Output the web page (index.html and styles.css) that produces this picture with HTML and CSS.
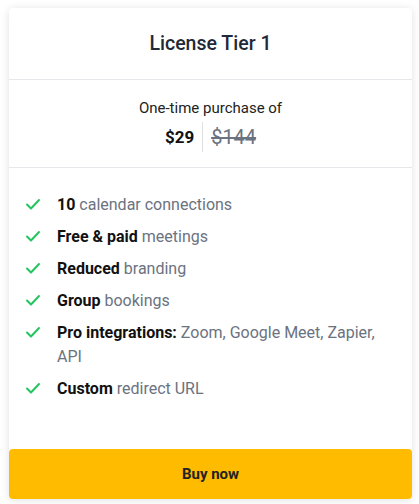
FILE: index.html
```html
<!DOCTYPE html>
<html>
<head>
<meta charset="utf-8">
<link rel="stylesheet" href="styles.css">
</head>
<body>
<div class="card">
  <div class="header"><h2 class="title">License Tier 1</h2></div>
  <div class="price">
    <div class="price-label">One-time purchase of</div>
    <div class="price-row">
      <span class="now">$29</span>
      <span class="sep"></span>
      <span class="was">$144</span>
    </div>
  </div>
  <ul class="features">
    <li><svg class="check" viewBox="0 0 16 16"><path d="M2 8.5l4 4L14 4"/></svg><span><b>10</b> calendar connections</span></li>
    <li><svg class="check" viewBox="0 0 16 16"><path d="M2 8.5l4 4L14 4"/></svg><span><b>Free &amp; paid</b> meetings</span></li>
    <li><svg class="check" viewBox="0 0 16 16"><path d="M2 8.5l4 4L14 4"/></svg><span><b>Reduced</b> branding</span></li>
    <li><svg class="check" viewBox="0 0 16 16"><path d="M2 8.5l4 4L14 4"/></svg><span><b>Group</b> bookings</span></li>
    <li><svg class="check" viewBox="0 0 16 16"><path d="M2 8.5l4 4L14 4"/></svg><span><b>Pro integrations:</b> Zoom, Google Meet, Zapier, API</span></li>
    <li><svg class="check" viewBox="0 0 16 16"><path d="M2 8.5l4 4L14 4"/></svg><span><b>Custom</b> redirect URL</span></li>
  </ul>
  <button class="buy">Buy now</button>
</div>
</body>
</html>
```
FILE: styles.css
```css
* { box-sizing: border-box; }
html, body { margin: 0; padding: 0; background: #fff; }
body { font-family: Roboto, "Liberation Sans", sans-serif; padding: 8px 7px 5px 9px; }
.card {
  width: 403px;
  height: 491px;
  background: #fff;
  border-radius: 4px;
  box-shadow: 0 1px 8px rgba(0,0,0,0.12);
  display: flex;
  flex-direction: column;
}
.header {
  height: 72px;
  display: flex;
  align-items: center;
  justify-content: center;
  border-bottom: 1px solid #e5e7eb;
}
.title { margin: 0; font-size: 19.5px; font-weight: 500; color: #1f2937; }
.price {
  height: 88px;
  border-bottom: 1px solid #e5e7eb;
  display: flex;
  flex-direction: column;
  align-items: center;
  padding-top: 18px;
}
.price-label { font-size: 15px; line-height: 20px; color: #222; }
.price-row { display: flex; align-items: center; margin-top: 4px; height: 30px; }
.now { font-size: 17px; font-weight: 700; color: #111; }
.sep { width: 1px; height: 30px; background: #e0e0e0; margin: 0 8px; }
.was { font-size: 20px; color: #6b7280; text-decoration: line-through; }
.features {
  list-style: none;
  margin: 0;
  padding: 25px 20px 0 16px;
  display: flex;
  flex-direction: column;
  gap: 8px;
  flex: 1;
}
.features li { display: flex; align-items: flex-start; font-size: 16px; line-height: 24px; color: #6b7280; }
.features b { color: #111; font-weight: 700; }
.check { width: 16px; height: 16px; margin-top: 3px; margin-right: 16px; flex: none; fill: none; stroke: #22c55e; stroke-width: 2; stroke-linecap: round; stroke-linejoin: round; }
.buy {
  height: 50px;
  border: none;
  border-radius: 4px;
  background: #ffbb00;
  color: #222;
  font-family: inherit;
  font-size: 15px;
  font-weight: 700;
  cursor: pointer;
}
```
